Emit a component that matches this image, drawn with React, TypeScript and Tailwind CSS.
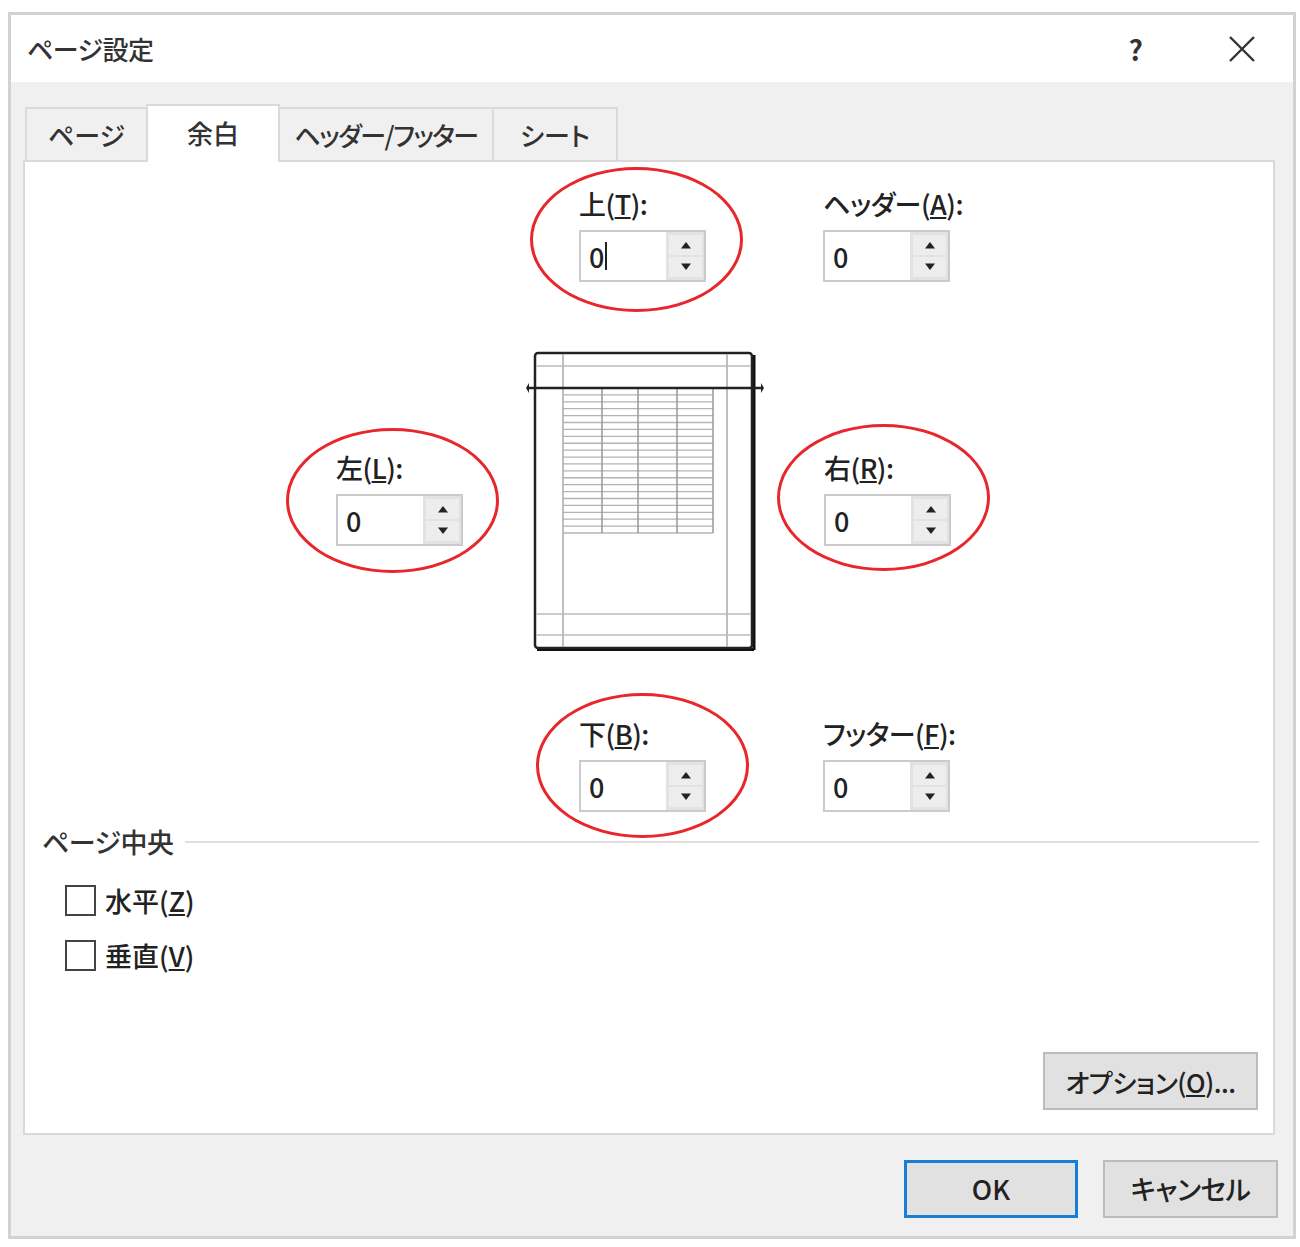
import React from "react";

const Tri = ({ up }: { up: boolean }) => (
  <svg width="12" height="8" viewBox="0 0 12 8">
    {up ? <path d="M1 7.5 L6 1 L11 7.5 Z" fill="#222" /> : <path d="M1 0.5 L6 7 L11 0.5 Z" fill="#222" />}
  </svg>
);

function Spin({ cursor }: { cursor?: boolean }) {
  return (
    <div className="w-[127px] h-[52px] border-2 border-[#cbcbcb] bg-white flex">
      <div className="flex-1 pl-[8px] flex items-center text-[27px] leading-none text-[#222]">
        0{cursor && <span className="inline-block w-[2px] h-[28px] bg-[#222] ml-[1px]" />}
      </div>
      <div className="w-[38px] bg-[#e2e2e2] flex flex-col py-[3px] pl-[3px] pr-[2px] gap-[2px]">
        <div className="flex-1 bg-[#ededed] flex items-center justify-center">
          <Tri up />
        </div>
        <div className="flex-1 bg-[#ededed] flex items-center justify-center">
          <Tri up={false} />
        </div>
      </div>
    </div>
  );
}

function Field({ label, k, tail, cursor }: { label: string; k: string; tail?: string; cursor?: boolean }) {
  return (
    <div className="flex flex-col w-[127px]">
      <div className="h-[34px] leading-[34px] text-[27px] text-[#222] whitespace-nowrap tracking-[-0.5px]">
        {label}(<span className="underline underline-offset-2">{k}</span>){tail ?? ":"}
      </div>
      <div className="mt-[9px]">
        <Spin cursor={cursor} />
      </div>
    </div>
  );
}

function Preview() {
  const rows: number[] = [];
  for (let i = 1; i < 21; i++) rows.push(37 + (145 / 21) * i);
  return (
    <svg width="240" height="302" viewBox="0 0 240 302">
      <line x1="229" y1="4" x2="229" y2="299" stroke="#111" strokeWidth="3" />
      <line x1="12" y1="298.5" x2="229" y2="298.5" stroke="#111" strokeWidth="3" />
      <rect x="10" y="2" width="217" height="295" rx="3" fill="white" stroke="#222" strokeWidth="2.5" />
      {rows.map((y, i) => (
        <line key={i} x1="38" y1={y} x2="188" y2={y} stroke="#b4b4b4" strokeWidth="1.3" />
      ))}
      <line x1="38" y1="182" x2="188" y2="182" stroke="#b4b4b4" strokeWidth="1.3" />
      {[77, 113, 152, 188].map((x) => (
        <line key={x} x1={x} y1="37" x2={x} y2="182" stroke="#999" strokeWidth="1.5" />
      ))}
      <line x1="38" y1="3" x2="38" y2="296" stroke="#aaa" strokeWidth="1.5" />
      <line x1="202" y1="3" x2="202" y2="296" stroke="#aaa" strokeWidth="1.5" />
      <line x1="11" y1="15" x2="226" y2="15" stroke="#bbb" strokeWidth="1.5" />
      <line x1="11" y1="263" x2="226" y2="263" stroke="#bbb" strokeWidth="1.5" />
      <line x1="11" y1="284" x2="226" y2="284" stroke="#bbb" strokeWidth="1.5" />
      <line x1="3" y1="37" x2="237" y2="37" stroke="#222" strokeWidth="2.5" />
      <path d="M1 37 L4 32 L4 42 Z" fill="#222" />
      <path d="M239 37 L236 32 L236 42 Z" fill="#222" />
    </svg>
  );
}

function Ellipse({ cls }: { cls: string }) {
  return <div className={"absolute border-[3px] border-[#e8262b] rounded-[50%] pointer-events-none " + cls} />;
}

function Check({ label, k }: { label: string; k: string }) {
  return (
    <div className="h-[40px] flex items-center">
      <div className="w-[31px] h-[31px] border-2 border-[#444] bg-white" />
      <div className="ml-[9px] text-[27px] leading-none text-[#222]">
        {label}(<span className="underline underline-offset-2">{k}</span>)
      </div>
    </div>
  );
}

export default function App() {
  return (
    <div className="w-[1300px] h-[1247px] bg-white pt-[12px] pl-[8px] font-['Noto_Sans_CJK_JP','Noto_Sans',sans-serif] [font-feature-settings:'palt'] font-medium text-[#222]">
      <div className="w-[1288px] h-[1227px] border-[3px] border-[#d2d2d2] bg-[#f0f0f0] flex flex-col">
        <div className="h-[67px] bg-white flex items-center pl-[16px] pr-[37px]">
          <div className="text-[26px] leading-none text-[#333] tracking-[-0.5px]">ページ設定</div>
          <div className="flex-1" />
          <div className="text-[28px] leading-none text-[#333] font-bold mr-[85px]">?</div>
          <svg width="28" height="28" viewBox="0 0 28 28">
            <path d="M2 2 L26 26 M26 2 L2 26" stroke="#333" strokeWidth="2.4" />
          </svg>
        </div>
        <div className="flex-1 flex flex-col pl-[12px] pr-[18px] pt-[22px]">
          <div className="h-[58px] flex items-end relative z-10 -mb-[2px] pl-[2px]">
            <div className="w-[123px] h-[53px] mb-[2px] border-2 border-b-0 border-[#dadada] flex items-center justify-center text-[26px] text-[#333]">
              ページ
            </div>
            <div className="w-[134px] h-[58px] bg-white border-2 border-b-0 border-[#dadada] -ml-[2px] flex items-center justify-center text-[26px] text-[#333] pb-[4px]">
              余白
            </div>
            <div className="w-[214px] h-[53px] mb-[2px] border-2 border-b-0 border-l-0 border-[#dadada] flex items-center justify-center text-[26px] text-[#333] tracking-[-1.5px]">
              ヘッダー/フッター
            </div>
            <div className="w-[124px] h-[53px] mb-[2px] border-2 border-b-0 border-l-0 border-[#dadada] flex items-center justify-center text-[26px] text-[#333]">
              シート
            </div>
          </div>
          <div className="relative w-[1252px] h-[975px] bg-white border-2 border-[#d9d9d9] flex flex-col">
            <div className="flex mt-[25px] pl-[554px] gap-[117px]">
              <Field label="上" k="T" cursor />
              <Field label="ヘッダー" k="A" />
            </div>
            <div className="flex mt-[69px] pl-[311px] items-start">
              <div className="mt-[100px]">
                <Field label="左" k="L" />
              </div>
              <div className="ml-[62px]">
                <Preview />
              </div>
              <div className="ml-[59px] mt-[100px]">
                <Field label="右" k="R" />
              </div>
            </div>
            <div className="flex mt-[64px] pl-[554px] gap-[117px]">
              <Field label="下" k="B" />
              <Field label="フッター" k="F" />
            </div>
            <div className="flex items-center mt-[13px] pl-[17px] pr-[14px]">
              <div className="text-[27px] leading-[34px] text-[#333] tracking-[-0.5px]">ページ中央</div>
              <div className="flex-1 h-[2px] bg-[#e0e0e0] ml-[12px]" />
            </div>
            <div className="flex flex-col pl-[40px] mt-[21px] gap-[15px]">
              <Check label="水平" k="Z" />
              <Check label="垂直" k="V" />
            </div>
            <div className="flex-1" />
            <div className="self-end mr-[15px] mb-[23px] w-[215px] h-[58px] bg-[#e1e1e1] border-2 border-[#bcbcbc] flex items-center justify-center text-[26px] text-[#222] tracking-[-0.5px]">
              オプション(<span className="underline underline-offset-2">O</span>)...
            </div>
            <Ellipse cls="left-[505px] top-[5px] w-[213px] h-[145px]" />
            <Ellipse cls="left-[261px] top-[266px] w-[213px] h-[145px]" />
            <Ellipse cls="left-[752px] top-[262px] w-[213px] h-[147px]" />
            <Ellipse cls="left-[511px] top-[531px] w-[213px] h-[145px]" />
          </div>
          <div className="flex justify-end mt-[25px] -mr-[3px] gap-[25px]">
            <div className="w-[174px] h-[58px] bg-[#e1e1e1] border-[3px] border-[#1a7fd4] flex items-center justify-center text-[27px] text-[#222]">
              OK
            </div>
            <div className="w-[175px] h-[58px] bg-[#e1e1e1] border-2 border-[#bcbcbc] flex items-center justify-center text-[27px] text-[#222] tracking-[-0.5px]">
              キャンセル
            </div>
          </div>
        </div>
      </div>
    </div>
  );
}
